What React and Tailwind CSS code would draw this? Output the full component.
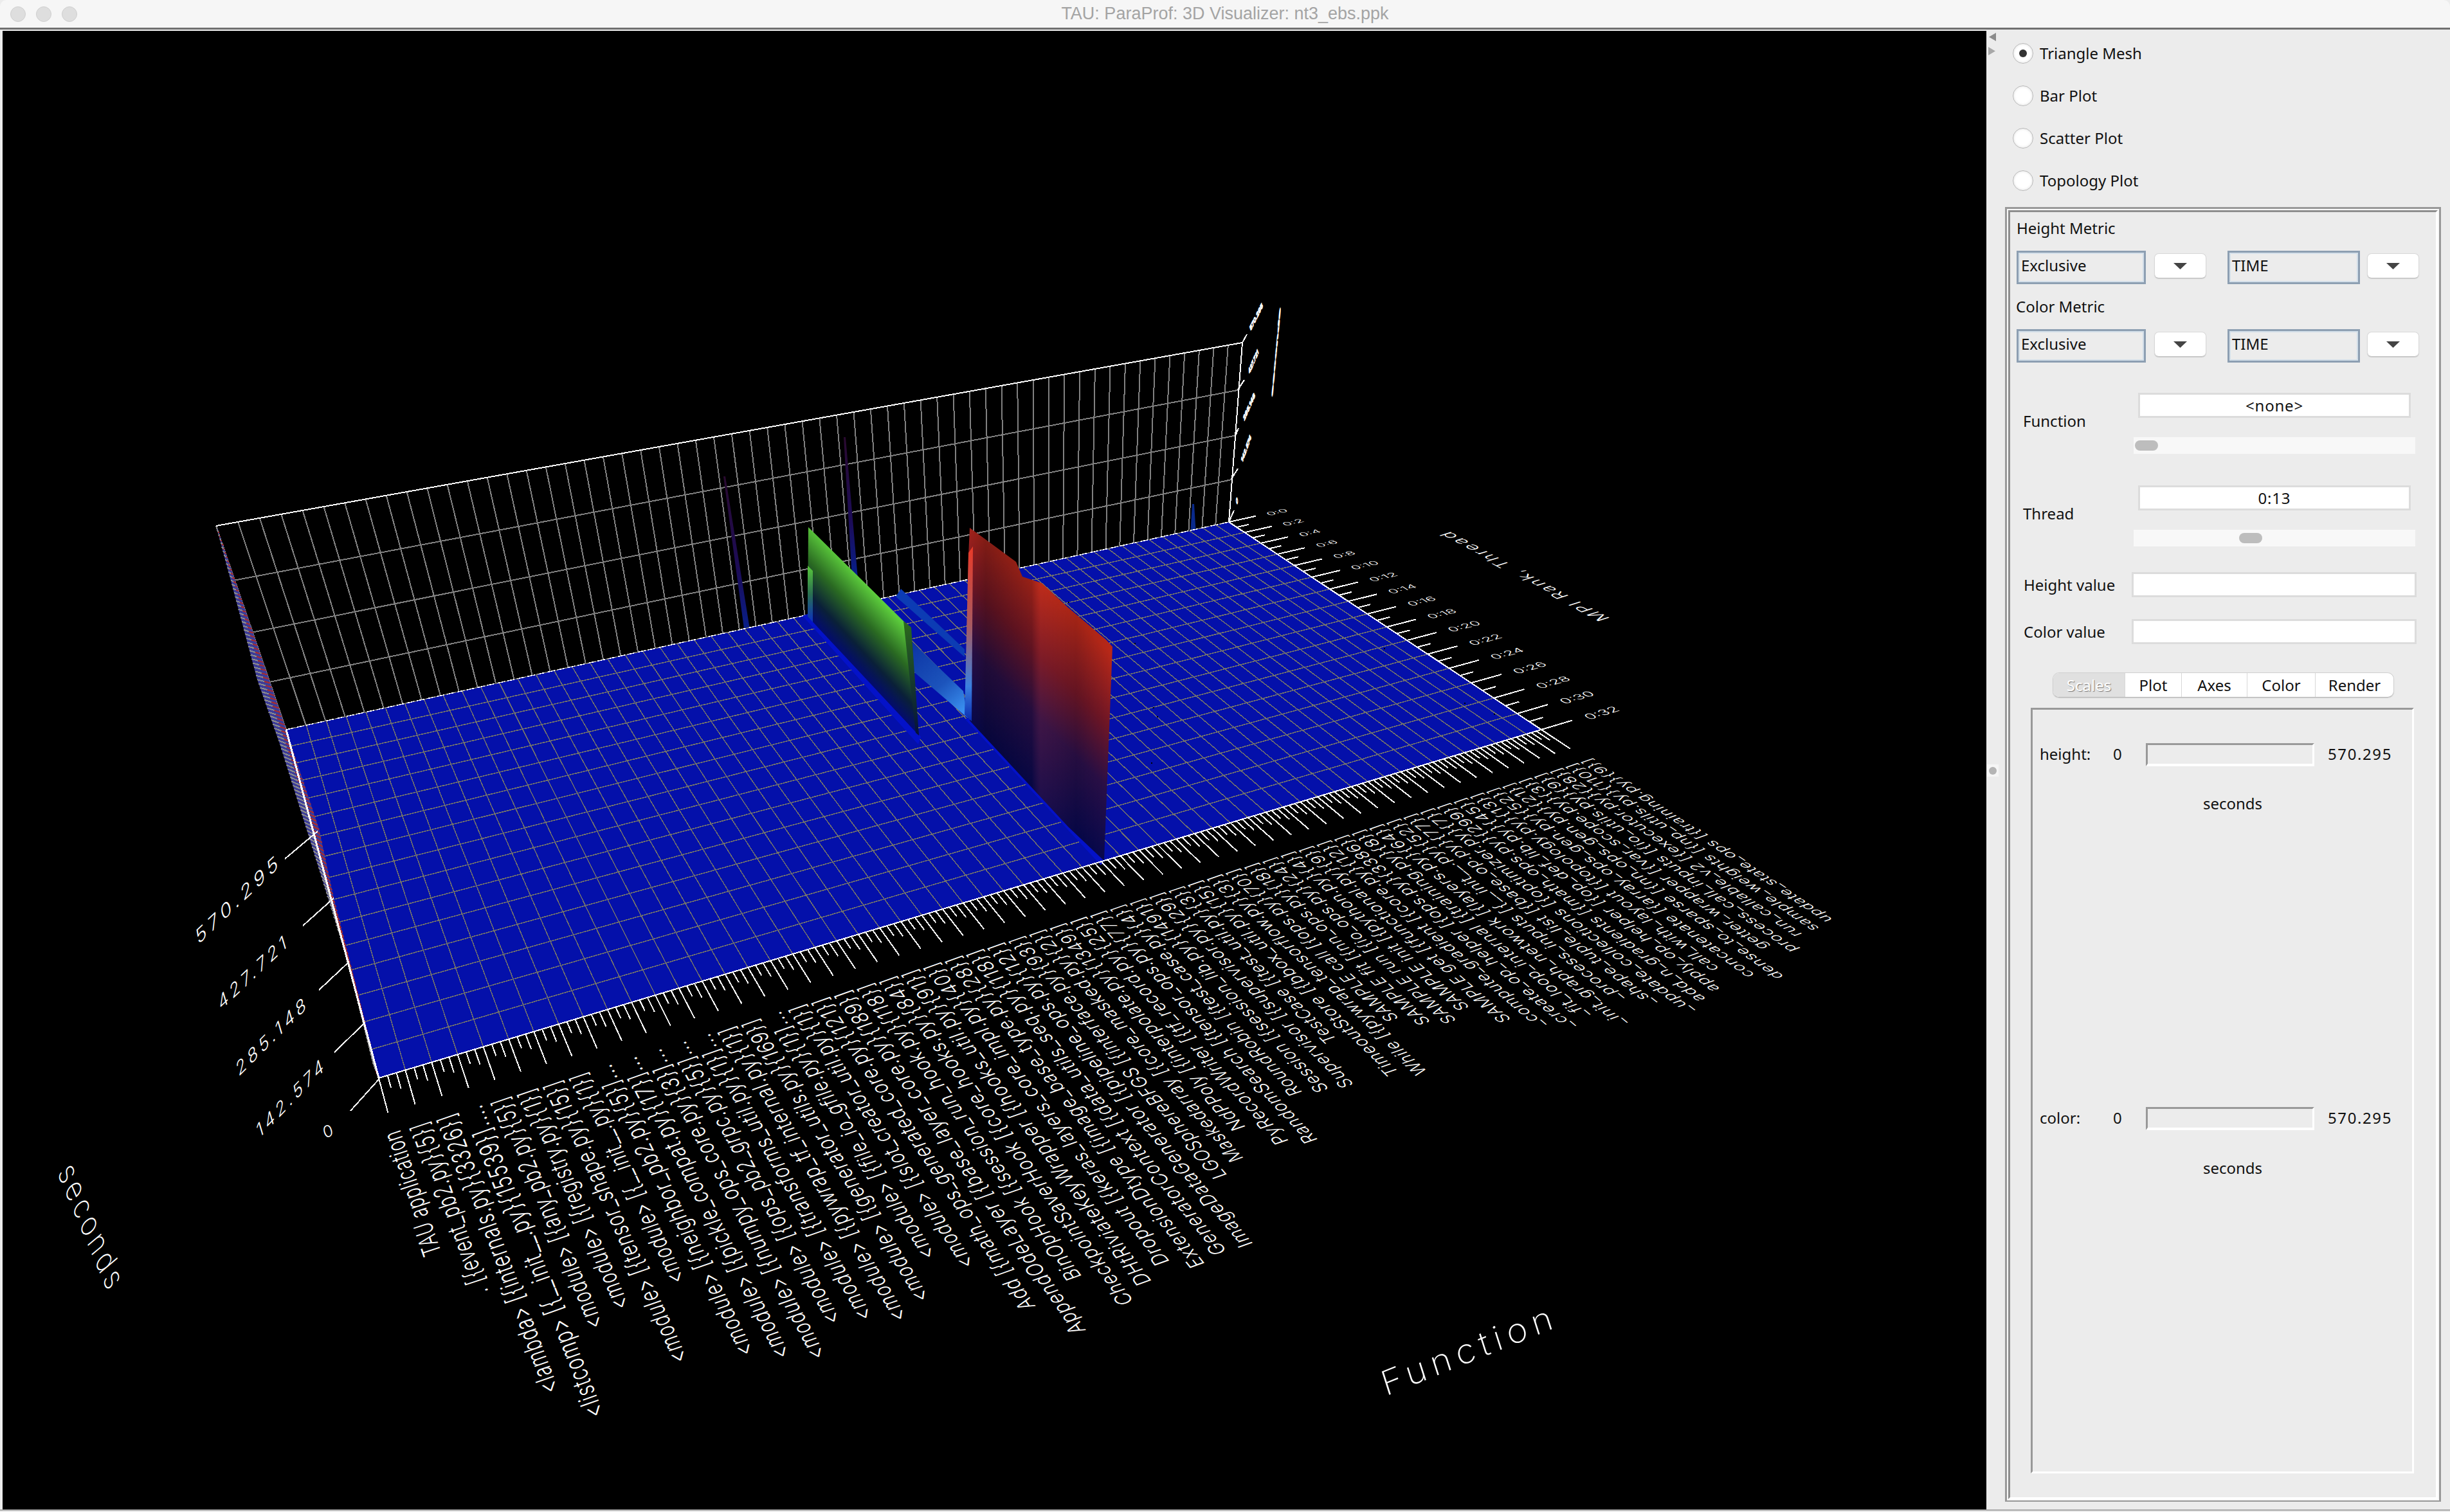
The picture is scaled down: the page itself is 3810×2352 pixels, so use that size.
import React from "react";

// floor corners of the 3D plot, in page pixels
const BL = [445, 1135];
const BR = [1911, 812];
const FR = [2397, 1135];
const FL = [589, 1677];

function makeHomography(p0, p1, p2, p3) {
  const dx1 = p1[0] - p2[0];
  const dx2 = p3[0] - p2[0];
  const sx = p0[0] - p1[0] + p2[0] - p3[0];
  const dy1 = p1[1] - p2[1];
  const dy2 = p3[1] - p2[1];
  const sy = p0[1] - p1[1] + p2[1] - p3[1];
  const den = dx1 * dy2 - dx2 * dy1;
  const g = (sx * dy2 - dx2 * sy) / den;
  const h = (dx1 * sy - sx * dy1) / den;
  const a = p1[0] - p0[0] + g * p1[0];
  const b = p3[0] - p0[0] + h * p3[0];
  const d = p1[1] - p0[1] + g * p1[1];
  const e = p3[1] - p0[1] + h * p3[1];
  return (u, v) => {
    const w = g * u + h * v + 1;
    return [(a * u + b * v + p0[0]) / w, (d * u + e * v + p0[1]) / w];
  };
}

const floorAt = makeHomography(BL, BR, FR, FL);
const wallAt = makeHomography([336, 818], [1932, 533], BR, BL);

const jacobian = (u, v) => {
  const e = 0.001;
  const p = floorAt(u, v);
  const pu = floorAt(u + e, v);
  const pv = floorAt(u, v + e);
  return {
    u: [(pu[0] - p[0]) / e, (pu[1] - p[1]) / e],
    v: [(pv[0] - p[0]) / e, (pv[1] - p[1]) / e],
  };
};

const pts = (list) => list.map((p) => p.join(",")).join(" ");
const n2 = (x) => x.toFixed(3);

const COLS = 58;
const ROWS = 16;
const FONT = 40;
const LABEL_SV = 0.0285;
const LABEL_SU = 0.0145;

const FUNCS = [
  "TAU application",
  ". [{event_pb2.py}{5}]",
  "<lambda> [{internals.py}{3326}]",
  "<listcomp> [{__init__.py}{15539}]....",
  "<module> [{any_pb2.py}{5}]",
  "<module> [{registry.py}{1}]",
  "<module> [{tensor_shape.py}{15}]",
  "<module> [{__init__.py}{1}]",
  "<module> [{neighbor_pb2.py}{5}]...",
  "<module> [{pickle_compat.py}{17}]...",
  "<module> [{numpy_ops_core.py}{3}]...",
  "<module> [{ops_pb2_grpc.py}{5}]...",
  "<module> [{transforms_util.py}{1}]...",
  "<module> [{pywrap_tf_internal.py}{1}]",
  "<module> [{generator_utils.py}{169}]",
  "<module> [{file_io_gfile.py}{1}]...",
  "<module> [{slot_creator_util.py}{1}]",
  "Add [{math_ops_generated_core.py}{121}]",
  "AppendOdeLayer [{base_layer_core.py}{189}]",
  "BinOpHook [{session_run_hook.py}{118}]",
  "CheckpointSaverHook [{core_hooks.py}{84}]",
  "DHtRiviateKeyWrapper [{hooks_util.py}{91}]",
  "Dropout [{keras_layers_core_impl.py}{40}]",
  "ExtensionDtype [{image_base_type.py}{28}]",
  "GeneratorContext [{data_utils_seq.py}{118}]",
  "ImageDataGenerator [{pipeline_ops.py}{12}]",
  "LGOSphereBFGS [{interface.py}{93}]",
  "Maskedarray [{core_masked.py}{2}]",
  "NdPPoly [{interpolate.py}{1349}]",
  "PyRecordWriter [{tf_record.py}{25}]",
  "RandomSearch [{tensor_ops.py}{77}]",
  "RoundRobin [{test_case.py}{4}]",
  "Session [{session_lib.py}{1491}]",
  "Supervisor [{supervisor.py}{29}]",
  "TestCase [{test_util.py}{3}]",
  "TimeoutStore [{bbox_util.py}{15}]",
  "While [{pywrap_tensorflow.py}{3}]",
  "SAMPLE call [{ops.py}{70}]",
  "SAMPLE fit [{nn_ops.py}{18}]",
  "SAMPLE run [{io_ops.py}{24}]",
  "SAMPLE init [{python.py}{4}]",
  "SAMPLE get [{functional.py}{9}]",
  "_compute_gradient [{core.py}{12}]",
  "_create_op_helper [{ops.py}{3386}]",
  "_fit_loop_internal [{training.py}{8}]",
  "_init_graph_network [{layers.py}{64}]",
  "_process_inputs [{__init__.py}{52}]",
  "_shape_tuple_list [{base_op.py}{77}]",
  "_update_collections [{optimizer.py}{7}]",
  "add_n_gradients [{math_ops.py}{299}]",
  "apply_op_helper [{op_def_lib.py}{45}]",
  "call_with_layout [{topology.py}{13}]",
  "concatenate [{array_ops_gen.py}{52}]",
  "dense_to_sparse [{nn_ops_gen.py}{21}]",
  "getter_wrapper [{var_scope.py}{3}]",
  "process_call_inputs [{io_utils.py}{9}]",
  "run_callable_v2 [{executor.py}{28}]",
  "sample_weights [{np_utils.py}{110}]",
  "update_state_ops [{training.py}{9}]",
];

const sliverLeft = [[338, 825], [400, 1057], [436, 1160], [479, 1297], [541, 1496], [581, 1658]];
const sliverRight = [[338, 822], [445, 1135], [496, 1289], [519, 1397], [589, 1677]];

function alongPath(path, t) {
  const lens = path.slice(1).map((p, i) => Math.hypot(p[0] - path[i][0], p[1] - path[i][1]));
  let rest = t * lens.reduce((s, l) => s + l, 0);
  for (let i = 0; i < lens.length; i++) {
    if (rest <= lens[i]) {
      const k = rest / lens[i];
      return [path[i][0] + (path[i + 1][0] - path[i][0]) * k, path[i][1] + (path[i + 1][1] - path[i][1]) * k];
    }
    rest -= lens[i];
  }
  return path[path.length - 1];
}

function Line({ a, b, color = "#808080", width = 2, dash }) {
  return <line x1={a[0]} y1={a[1]} x2={b[0]} y2={b[1]} stroke={color} strokeWidth={width} strokeDasharray={dash} shapeRendering="crispEdges" />;
}

// text placed with an explicit matrix, x and y are the em vectors on screen
function SkewText({ at, x, y, children, anchor = "start", weight = 300, spacing = 0, smear = 0 }) {
  const m = `matrix(${n2(x[0] / FONT)} ${n2(x[1] / FONT)} ${n2(y[0] / FONT)} ${n2(y[1] / FONT)} ${n2(at[0])} ${n2(at[1])})`;
  return (
    <text
      transform={m}
      fontSize={FONT}
      textAnchor={anchor}
      fill="#fff"
      stroke={smear ? "#fff" : "none"}
      strokeWidth={smear}
      letterSpacing={spacing * FONT}
      fontWeight={weight}
      fontFamily="Inter, 'Liberation Sans', sans-serif"
      textRendering="geometricPrecision"
    >
      {children}
    </text>
  );
}

function FunctionLabel({ name, index }) {
  const u = index / COLS;
  const gap = 0.108;
  const vMid = 1 + gap + name.length * 0.58 * LABEL_SV * 0.5;
  const j = jacobian(u, vMid);
  const at = floorAt(u + 0.3 * LABEL_SU, 1 + gap);
  // the stroke text leans a little further right than the floor lines on the near side
  const lean = 0.07 * (1 - u);
  const x = [-j.v[0] * LABEL_SV - lean * Math.abs(j.v[1] * LABEL_SV), -j.v[1] * LABEL_SV];
  const y = [j.u[0] * LABEL_SU, j.u[1] * LABEL_SU];
  return (
    <SkewText at={at} x={x} y={y} anchor="end" spacing={0.04}>
      {name}
    </SkewText>
  );
}

function ThreadLabel({ k }) {
  const v = k / 32;
  const j = jacobian(1.05, v);
  const at = floorAt(1.05, v + 0.012);
  return (
    <SkewText at={at} x={[j.u[0] * 0.0175, j.u[1] * 0.0175]} y={[j.v[0] * 0.024, j.v[1] * 0.024]}>
      {`0:${k}`}
    </SkewText>
  );
}

function Plot() {
  const wallV = [];
  for (let i = 0; i <= COLS; i++) wallV.push(i / COLS);
  const rows = [];
  for (let i = 0; i <= ROWS; i++) rows.push(i / ROWS);

  const ticks = [];
  for (let i = 0; i <= COLS * 3; i++) ticks.push(i);
  const threadTicks = [];
  for (let i = 0; i <= 32; i++) threadTicks.push(i);
  const threadLabels = threadTicks.filter((k) => k % 2 === 0);

  const sliver = [];
  for (let i = 0; i < 130; i++) sliver.push(i / 130);

  return (
    <svg viewBox="4 48 3085 2300" className="block w-full h-full">
      <defs>
        <linearGradient id="greenWall" gradientUnits="userSpaceOnUse" x1="1343" y1="1051" x2="1416" y2="983">
          <stop offset="0" stopColor="#030c6c" />
          <stop offset="0.25" stopColor="#0a2038" />
          <stop offset="0.6" stopColor="#2a6a22" />
          <stop offset="1" stopColor="#5ccc3c" />
        </linearGradient>
        <linearGradient id="redWall" gradientUnits="userSpaceOnUse" x1="1610" y1="1228" x2="1776" y2="1066">
          <stop offset="0" stopColor="#08084e" />
          <stop offset="0.35" stopColor="#2a0f48" />
          <stop offset="0.65" stopColor="#701626" />
          <stop offset="1" stopColor="#b82818" />
        </linearGradient>
        <linearGradient id="redStreaks" gradientUnits="userSpaceOnUse" x1="1506" y1="0" x2="1730" y2="0">
          <stop offset="0" stopColor="#000" stopOpacity="0" />
          <stop offset="0.12" stopColor="#000" stopOpacity="0.24" />
          <stop offset="0.44" stopColor="#000" stopOpacity="0.14" />
          <stop offset="0.5" stopColor="#ff5030" stopOpacity="0.1" />
          <stop offset="0.75" stopColor="#000" stopOpacity="0.12" />
          <stop offset="1" stopColor="#000" stopOpacity="0" />
        </linearGradient>
        <linearGradient id="redEdge" x1="0" y1="0" x2="0" y2="1">
          <stop offset="0" stopColor="#e83a28" />
          <stop offset="0.45" stopColor="#a85a60" />
          <stop offset="0.8" stopColor="#3a80e0" />
          <stop offset="1" stopColor="#0a2ab0" />
        </linearGradient>
        <linearGradient id="greenEdge" x1="0" y1="0" x2="0" y2="1">
          <stop offset="0" stopColor="#58c83a" />
          <stop offset="0.5" stopColor="#2a7050" />
          <stop offset="1" stopColor="#0a30c0" />
        </linearGradient>
        <linearGradient id="greenRight" x1="0" y1="0" x2="0" y2="1">
          <stop offset="0" stopColor="#2c6a1c" />
          <stop offset="1" stopColor="#04103c" />
        </linearGradient>
        <linearGradient id="ridge" gradientUnits="userSpaceOnUse" x1="1419" y1="1000" x2="1505" y2="1100">
          <stop offset="0" stopColor="#0c34a4" />
          <stop offset="0.6" stopColor="#1c54bc" />
          <stop offset="1" stopColor="#3a90f0" />
        </linearGradient>
        <linearGradient id="spike" x1="0" y1="0" x2="0" y2="1">
          <stop offset="0" stopColor="#2a0a30" />
          <stop offset="0.6" stopColor="#1c0c58" />
          <stop offset="1" stopColor="#06208c" />
        </linearGradient>
      </defs>

      {/* back wall */}
      {wallV.map((u) => (
        <Line key={u} a={wallAt(u, 0)} b={wallAt(u, 1)} />
      ))}
      {[0.25, 0.5, 0.75].map((v) => (
        <Line key={v} a={wallAt(0, v)} b={wallAt(1, v)} />
      ))}
      <Line a={[336, 818]} b={[1932, 533]} color="#fff" />
      <Line a={[1932, 533]} b={BR} color="#fff" />

      {/* thin spikes behind the floor edge */}
      <polygon points="1125,741 1128,741 1167,985 1158,985" fill="url(#spike)" />
      <polygon points="1312,680 1315,680 1334,900 1325,900" fill="url(#spike)" />
      <polygon points="1854,784 1857,784 1860,832 1851,832" fill="#0a2a8c" />

      {/* floor */}
      <polygon points={pts([BL, BR, FR, FL])} fill="#0410aa" />
      {wallV.map((u) => (
        <Line key={u} a={floorAt(u, 0)} b={floorAt(u, 1)} color="#72726c" width={1.5} />
      ))}
      {rows.map((v) => (
        <Line key={v} a={floorAt(0, v)} b={floorAt(1, v)} color="#72726c" width={1.5} />
      ))}
      <Line a={BL} b={BR} color="#fff" width={1.5} dash="12 4" />

      {/* side wall seen edge on */}
      <polygon points={pts([...sliverRight, ...[...sliverLeft].reverse()])} fill="#3c3c98" />
      {sliver.map((t) => {
        const a = alongPath(sliverLeft, t);
        const b = alongPath(sliverRight, Math.min(1, t + 0.008));
        const mid = [a[0] + (b[0] - a[0]) * 0.55, a[1] + (b[1] - a[1]) * 0.55];
        return (
          <g key={t}>
            <Line a={a} b={mid} color="#8c8c8c" />
            <Line a={mid} b={b} color="#a82c30" />
          </g>
        );
      })}

      {/* surface peaks */}
      <polygon points="1248,958 1256,955 1432,1146 1428,1158" fill="#0412c8" />
      <polygon points="1500,1118 1508,1118 1718,1338 1712,1346" fill="#0412c8" />
      <polygon points="1401,916 1500,1010 1500,1022 1393,928" fill="#0c3cb4" />
      <polygon points="1419,999 1498,1075 1505,1117 1421,1045" fill="url(#ridge)" />
      <polygon points="1257,820 1411,972 1429,1144 1256,959" fill="url(#greenWall)" />
      <polygon points="1256,880 1264,888 1264,968 1256,959" fill="url(#greenEdge)" />
      <polygon points="1405,966 1417,976 1429,1144 1424,1140" fill="url(#greenRight)" />
      <polygon
        points="1508,821 1580,874 1590,897 1620,907 1661,945 1720,995 1730,1006 1717,1339 1661,1286 1508,1121 1504,1050 1506,865"
        fill="url(#redWall)"
      />
      <polygon
        points="1508,821 1580,874 1590,897 1620,907 1661,945 1720,995 1730,1006 1717,1339 1661,1286 1508,1121 1504,1050 1506,865"
        fill="url(#redStreaks)"
      />
      <polygon points="1506,860 1513,850 1511,1122 1500,1112" fill="url(#redEdge)" />

      {/* floor edges */}
      <Line a={BR} b={FR} color="#fff" />
      <Line a={FR} b={FL} color="#fff" />
      <Line a={FL} b={BL} color="#fff" width={3} />

      {/* function axis */}
      {ticks.map((i) => {
        const u = i / (COLS * 3);
        const len = i % 3 === 0 ? 0.072 : i % 3 === 1 ? 0.026 : 0.034;
        return <Line key={i} a={floorAt(u, 1)} b={floorAt(u, 1 + len)} color="#fff" />;
      })}
      {FUNCS.map((name, i) => (
        <FunctionLabel key={i} name={name} index={i} />
      ))}

      {/* thread axis */}
      {threadTicks.map((k) => (
        <Line key={k} a={floorAt(1, k / 32)} b={floorAt(k % 2 ? 1.016 : 1.036, k / 32)} color="#fff" />
      ))}
      {threadLabels.map((k) => (
        <ThreadLabel key={k} k={k} />
      ))}
      <SkewText at={[2505, 962]} x={[-25, -13.5]} y={[24, -7.5]} spacing={0.12}>
        MPI Rank, Thread
      </SkewText>
      <SkewText at={[2155, 2172]} x={[52, -21]} y={[16, 50]} weight={200} spacing={0.16}>
        Function
      </SkewText>

      {/* height axis */}
      <Line a={[494, 1293]} b={[443, 1336]} color="#fff" />
      <Line a={[519, 1397]} b={[471, 1440]} color="#fff" />
      <Line a={[543, 1496]} b={[496, 1540]} color="#fff" />
      <Line a={[566, 1592]} b={[520, 1637]} color="#fff" />
      <Line a={[589, 1679]} b={[545, 1728]} color="#fff" />
      <SkewText at={[308, 1470]} x={[25, -24]} y={[8, 28]} spacing={0.2}>570.295</SkewText>
      <SkewText at={[343, 1572]} x={[22, -21]} y={[8, 27]} spacing={0.2}>427.721</SkewText>
      <SkewText at={[371, 1675]} x={[22, -22]} y={[8, 27]} spacing={0.2}>285.148</SkewText>
      <SkewText at={[403, 1771]} x={[21, -22]} y={[8, 27]} spacing={0.2}>142.574</SkewText>
      <SkewText at={[505, 1771]} x={[24, -9]} y={[7, 24]}>0</SkewText>
      <SkewText at={[89, 1825]} x={[17, 40]} y={[-38, 32]} weight={200} spacing={0.12}>seconds</SkewText>

      {/* height labels on the far wall, almost edge on */}
      <Line a={[1932, 533]} b={[1939, 520]} color="#fff" />
      <Line a={[1925, 606]} b={[1935, 591]} color="#fff" />
      <Line a={[1921, 678]} b={[1926, 666]} color="#fff" />
      <Line a={[1915, 745]} b={[1925, 729]} color="#fff" />
      <Line a={[1911, 812]} b={[1919, 794]} color="#fff" />
      <SkewText at={[1945, 515]} x={[4.7, -9.4]} y={[3, 8]} weight={700} smear={5}>570.295</SkewText>
      <SkewText at={[1943, 582]} x={[3.9, -9]} y={[3, 8]} weight={700} smear={5}>427.721</SkewText>
      <SkewText at={[1935, 655]} x={[4.4, -10]} y={[3, 8]} weight={700} smear={5}>285.148</SkewText>
      <SkewText at={[1932, 720]} x={[3.6, -10]} y={[3, 8]} weight={700} smear={5}>142.574</SkewText>
      <SkewText at={[1924, 786]} x={[2, -12]} y={[3, 8]} weight={700} smear={5}>0</SkewText>
      <SkewText at={[1979, 617]} x={[3.1, -33]} y={[3, 1]} weight={700} smear={5}>seconds</SkewText>

      {/* stray dropouts in the mesh */}
      {[[1661, 936], [1764, 1000], [1793, 1100], [1799, 1114], [1790, 1186], [2152, 1008], [2277, 1093], [2323, 1110]].map((p) => (
        <rect key={p[0]} x={p[0]} y={p[1]} width="2" height="2" fill="#000" />
      ))}
    </svg>
  );
}

function Radio({ label, checked }) {
  return (
    <div className="flex items-center h-[66px] gap-[10px]">
      <div className="flex items-center justify-center w-[32px] h-[32px] rounded-full bg-white border border-[#b8b8b8] shadow-[inset_0_0_4px_#ddd]">
        {checked && <div className="w-[12px] h-[12px] rounded-full bg-[#333]" />}
      </div>
      <span>{label}</span>
    </div>
  );
}

function MetricField({ text, width }) {
  return (
    <div className={`${width} h-full border-[3px] border-[#8d9fb2]`}>
      <div className="flex items-center h-full pl-[2px] pb-[6px] border-[2px] border-[#d3dfe9]">{text}</div>
    </div>
  );
}

function ArrowButton({ className }) {
  return (
    <div className={`${className} flex items-center justify-center w-[81px] h-[39px] mt-[4px] bg-white rounded-[7px] border border-[#d8d8d8] border-b-[#c4c4c4] shadow-[0_1px_1px_#ccc]`}>
      <svg width="21" height="10" viewBox="0 0 21 10">
        <polygon points="0,0 21,0 10.5,10" fill="#444" />
      </svg>
    </div>
  );
}

function MetricRow({ first, second, className }) {
  return (
    <div className={`flex pl-[10px] h-[52px] ${className}`}>
      <MetricField text={first} width="w-[201px]" />
      <ArrowButton className="ml-[13px]" />
      <MetricField text={second} width="w-[206px] ml-[33px]" />
      <ArrowButton className="ml-[11px]" />
    </div>
  );
}

function SliderBlock({ label, value, thumb, className }) {
  return (
    <div className={`flex h-[95px] ${className}`}>
      <div className="flex items-center w-[192px] pl-[20px] pb-[7px]">{label}</div>
      <div className="w-[438px]">
        <div className="flex items-center justify-center ml-[7px] w-[424px] h-[39px] bg-white border-[3px] border-[#dcdcdc] tracking-[0.8px]">{value}</div>
        <div className={`flex items-center mt-[30px] h-[26px] bg-[#f8f8f8] ${thumb}`}>
          <div className="w-[36px] h-[16px] rounded-full bg-[#bdbdbd]" />
        </div>
      </div>
    </div>
  );
}

function ValueRow({ label, className }) {
  return (
    <div className={`flex items-center h-[39px] ${className}`}>
      <div className="w-[189px] pl-[21px]">{label}</div>
      <div className="w-[443px] h-full bg-white border-[3px] border-[#dcdcdc]" />
    </div>
  );
}

function ScaleRow({ label, className }) {
  return (
    <div className={`flex items-center h-[36px] pl-[11px] ${className}`}>
      <div className="w-[114px] pb-[2px]">{label}</div>
      <div className="w-[51px] pb-[2px]">0</div>
      <div className="w-[262px] h-full bg-[#ececec] border-t-[3px] border-l-[3px] border-r-[3px] border-b-[4px] border-t-[#999] border-l-[#999] border-r-white border-b-white" />
      <div className="ml-[21px] pb-[2px] tracking-[1.6px]">570.295</div>
    </div>
  );
}

function Tabs() {
  const tabs = [
    ["Plot", "w-[88px]"],
    ["Axes", "w-[102px]"],
    ["Color", "w-[106px]"],
    ["Render", "flex-1"],
  ];
  return (
    <div className="flex ml-[66px] mt-[44px] w-[531px] h-[39px] rounded-[10px] overflow-hidden bg-white border border-[#d0d0d0] border-b-[#bbb] shadow-[0_1px_1px_#ccc]">
      <div className="flex items-center justify-center w-[111px] bg-[#e0e0e0] text-white [text-shadow:1px_1px_1px_#777]">Scales</div>
      {tabs.map(([name, width]) => (
        <div key={name} className={`flex items-center justify-center ${width} border-l border-[#d8d8d8]`}>
          {name}
        </div>
      ))}
    </div>
  );
}

function ControlPanel() {
  return (
    <div className="relative w-[721px] h-full pt-[4px] text-[24px] leading-none text-[#111]">
      {/* split pane arrows and handle */}
      <svg className="absolute left-[2px] top-[5px]" width="14" height="36" viewBox="0 0 14 36">
        <polygon points="13,0 13,13 2,6.5" fill="#8c8c8c" />
        <polygon points="1,22 1,35 12,28.5" fill="#a8a8a8" />
      </svg>
      <div className="absolute left-[1px] top-[1143px] flex items-center justify-center w-[18px] h-[19px] bg-[#f6f6f6]">
        <div className="w-[12px] h-[12px] rounded-full bg-[#b4b4b4]" />
      </div>

      <div className="pl-[41px]">
        <Radio label="Triangle Mesh" checked />
        <Radio label="Bar Plot" />
        <Radio label="Scatter Plot" />
        <Radio label="Topology Plot" />
      </div>

      {/* etched group border */}
      <div className="ml-[29px] mt-[8px] w-[678px] h-[2014px] border-[3px] border-b-[2px] border-[#999]">
        <div className="h-full border-[2px] border-[#f8f8f8]">
          <div className="h-full border-[3px] border-t-[#8e8e8e] border-l-[#8e8e8e] border-r-white border-b-white">
            <div className="flex items-center h-[46px] mt-[2px] pl-[10px]">Height Metric</div>
            <MetricRow first="Exclusive" second="TIME" className="mt-[12px]" />
            <div className="flex items-center h-[46px] mt-[12px] pl-[9px]">Color Metric</div>
            <MetricRow first="Exclusive" second="TIME" className="mt-[12px]" />
            <SliderBlock label="Function" value="<none>" thumb="pl-[2px]" className="mt-[47px]" />
            <SliderBlock label="Thread" value="0:13" thumb="pl-[164px]" className="mt-[49px]" />
            <ValueRow label="Height value" className="mt-[40px]" />
            <ValueRow label="Color value" className="mt-[34px]" />
            <Tabs />
            <div className="ml-[32px] mt-[16px] w-[596px] h-[1191px] border-[3px] border-t-[#999] border-l-[#999] border-r-white border-b-white">
              <ScaleRow label="height:" className="mt-[52px]" />
              <div className="flex items-center justify-center h-[40px] mt-[38px] pl-[32px]">seconds</div>
              <ScaleRow label="color:" className="mt-[452px]" />
              <div className="flex items-center justify-center h-[40px] mt-[39px] pl-[32px]">seconds</div>
            </div>
          </div>
        </div>
      </div>
    </div>
  );
}

export default function App() {
  return (
    <div className="flex flex-col w-[3810px] h-[2352px] overflow-hidden bg-[#ececec] [font-family:'Noto_Sans',sans-serif]">
      {/* title bar */}
      <div className="relative flex items-center justify-center h-[43px] bg-[#f6f6f6] rounded-t-[10px]">
        <div className="absolute left-[16px] flex gap-[16px]">
          <div className="w-[24px] h-[24px] rounded-full bg-[#dedede] border border-[#cfcfcf]" />
          <div className="w-[24px] h-[24px] rounded-full bg-[#dedede] border border-[#cfcfcf]" />
          <div className="w-[24px] h-[24px] rounded-full bg-[#dedede] border border-[#cfcfcf]" />
        </div>
        <span className="text-[27px] text-[#a4a4a4] [font-family:'Liberation_Sans',sans-serif]">TAU: ParaProf: 3D Visualizer: nt3_ebs.ppk</span>
      </div>
      <div className="h-[3px] bg-[#707070]" />

      <div className="flex h-[2302px]">
        <div className="w-[3089px] pl-[4px] pt-[2px]">
          <div className="w-[3085px] h-[2300px] bg-black">
            <Plot />
          </div>
        </div>
        <ControlPanel />
      </div>
      <div className="h-[2px] bg-[#a8a8a8]" />
    </div>
  );
}
